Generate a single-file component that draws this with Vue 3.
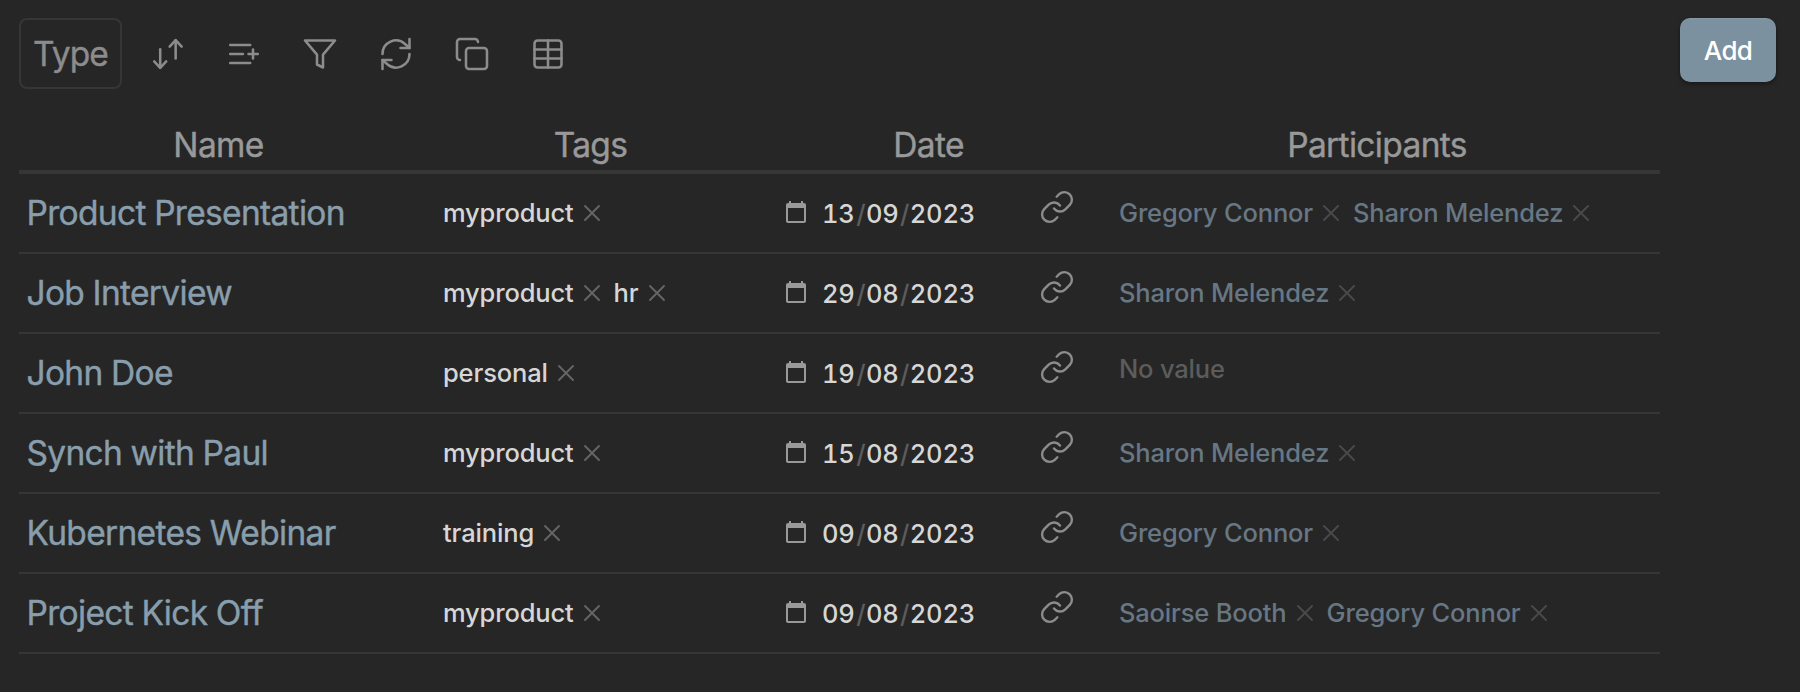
<script setup>
const rows = [
  { name: 'Product Presentation', tags: ['myproduct'], date: ['13', '09', '2023'], people: ['Gregory Connor', 'Sharon Melendez'] },
  { name: 'Job Interview', tags: ['myproduct', 'hr'], date: ['29', '08', '2023'], people: ['Sharon Melendez'] },
  { name: 'John Doe', tags: ['personal'], date: ['19', '08', '2023'], people: [] },
  { name: 'Synch with Paul', tags: ['myproduct'], date: ['15', '08', '2023'], people: ['Sharon Melendez'] },
  { name: 'Kubernetes Webinar', tags: ['training'], date: ['09', '08', '2023'], people: ['Gregory Connor'] },
  { name: 'Project Kick Off', tags: ['myproduct'], date: ['09', '08', '2023'], people: ['Saoirse Booth', 'Gregory Connor'] },
]
const tools = [
  { id: 'sort', paths: ['M6.8 8.8v12.4', 'M2.8 16.9l4 4.3 4-4.3', 'M17.1 15V2.8', 'M13.1 7.1l4-4.3 4 4.3'] },
  { id: 'properties', paths: ['M2.8 6h13.3', 'M2.8 12h8.5', 'M2.8 18h13.3', 'M15 12h6.2', 'M18 9v6'] },
  { id: 'filter', paths: ['M22 3H2l8 9.46V19l4 2v-8.54z'] },
  { id: 'refresh', paths: ['M21 2v6h-6', 'M3 12a9 9 0 0 1 15-6.7L21 8', 'M3 22v-6h6', 'M21 12a9 9 0 0 1-15 6.7L3 16'] },
  { id: 'copy', paths: ['M10 8h10a2 2 0 0 1 2 2v10a2 2 0 0 1-2 2H10a2 2 0 0 1-2-2V10a2 2 0 0 1 2-2z', 'M4 16c-1.1 0-2-.9-2-2V4c0-1.1.9-2 2-2h10c1.1 0 2 .9 2 2'] },
  { id: 'table', paths: ['M5 3h14a2 2 0 0 1 2 2v14a2 2 0 0 1-2 2H5a2 2 0 0 1-2-2V5a2 2 0 0 1 2-2z', 'M3 9h18', 'M3 15h18', 'M12 3v18'] },
]
</script>

<template>
  <main class="view">
    <header class="toolbar">
      <button class="type">Type</button>
      <div class="tools">
        <svg v-for="t in tools" :key="t.id" class="tool" viewBox="0 0 24 24">
          <path v-for="d in t.paths" :key="d" :d="d" />
        </svg>
      </div>
      <button class="add">Add</button>
    </header>

    <section class="table">
      <div class="row head">
        <div>Name</div>
        <div>Tags</div>
        <div>Date</div>
        <div>Participants</div>
      </div>
      <div v-for="r in rows" :key="r.name" class="row body">
        <div class="cell name">{{ r.name }}</div>
        <div class="cell tags">
          <span v-for="t in r.tags" :key="t" class="chip">
            <span class="label">{{ t }}</span>
            <svg class="x" viewBox="0 0 16 16"><path d="M1 1l14 14M15 1L1 15" /></svg>
          </span>
        </div>
        <div class="cell date">
          <svg class="calendar" viewBox="0 0 20 22">
            <path class="solid" d="M3 0h2v2h10V0h2v2h1a2 2 0 0 1 2 2v16a2 2 0 0 1-2 2H2a2 2 0 0 1-2-2V4a2 2 0 0 1 2-2h1zM2 7v13h16V7z" />
          </svg>
          <span class="digits">{{ r.date[0] }}<i>/</i>{{ r.date[1] }}<i>/</i>{{ r.date[2] }}</span>
          <svg class="link" viewBox="0 0 24 24">
            <path d="M10 13a5 5 0 0 0 7.54.54l3-3a5 5 0 0 0-7.07-7.07l-1.72 1.71" />
            <path d="M14 11a5 5 0 0 0-7.54-.54l-3 3a5 5 0 0 0 7.07 7.07l1.71-1.71" />
          </svg>
        </div>
        <div class="cell people">
          <span v-for="p in r.people" :key="p" class="chip">
            <span class="label">{{ p }}</span>
            <svg class="x" viewBox="0 0 16 16"><path d="M1 1l14 14M15 1L1 15" /></svg>
          </span>
          <span v-if="!r.people.length" class="empty">No value</span>
        </div>
      </div>
    </section>
  </main>
</template>

<style>
html, body { margin: 0; background: #262626; }
</style>

<style scoped>
.view {
  box-sizing: border-box;
  height: 692px;
  padding: 18px 24px 0 19px;
  background: #262626;
  font-family: Inter, "Liberation Sans", sans-serif;
  font-weight: 500;
  color: #999;
  overflow: hidden;
}
button { font-family: inherit; font-weight: inherit; padding: 0; }
svg { fill: none; stroke: currentColor; stroke-linecap: round; stroke-linejoin: round; flex: none; display: block; }
.toolbar { display: flex; align-items: flex-start; height: 96px; }
.type {
  box-sizing: border-box;
  width: 103px;
  height: 71px;
  border: 2px solid #363636;
  border-radius: 8px;
  background: none;
  color: #8c8c8c;
  font-size: 33.5px;
  font-weight: 400;
  -webkit-text-stroke: 0.4px currentColor;
  letter-spacing: -0.9px;
  line-height: 67px;
  padding-top: 1px;
}
.tools { display: flex; gap: 40px; margin: 18px 0 0 28px; color: #8c8c8c; }
.tool { width: 36px; height: 36px; stroke-width: 1.7; }
.add {
  width: 96px;
  height: 64px;
  margin-left: auto;
  border: 0;
  border-radius: 10px;
  background: #7b919f;
  color: #fff;
  font-size: 26px;
  letter-spacing: -0.7px;
  line-height: 66px;
  box-shadow: 0 2px 4px rgba(0, 0, 0, 0.4), inset 0 1px 0 rgba(255, 255, 255, 0.08);
}
.table { width: 1641px; }
.row { display: grid; grid-template-columns: 400px 344px 332px 565px; box-sizing: border-box; }
.head {
  height: 60px;
  border-bottom: 4px solid #363636;
  text-align: center;
  font-size: 33.5px;
  font-weight: 400;
  -webkit-text-stroke: 0.4px currentColor;
  letter-spacing: -0.65px;
  line-height: 62px;
}
.head > div { margin-left: -1px; }
.body { height: 80px; border-bottom: 2px solid #363636; }
.cell { display: flex; align-items: center; height: 78px; white-space: nowrap; }
.name {
  padding-left: 7.5px;
  color: #889eac;
  font-size: 33.5px;
  font-weight: 400;
  -webkit-text-stroke: 0.4px currentColor;
  letter-spacing: -0.68px;
  word-spacing: -0.3px;
}
.tags { padding-left: 24px; gap: 14px; color: #d6d6d6; font-size: 25.5px; letter-spacing: -0.15px; }
.people { padding-left: 24px; gap: 14px; color: #677784; font-size: 25.5px; letter-spacing: -0.17px; }
.label { margin-top: -2px; }
.chip { display: flex; align-items: center; gap: 10px; }
.x { width: 16px; height: 16px; stroke-width: 1.8; color: #666; }
.people .x { color: #4a4a4a; }
.date { padding-left: 23px; }
.calendar { width: 20px; height: 22px; color: #999; margin-top: -2px; }
.calendar .solid { fill: currentColor; stroke: none; fill-rule: evenodd; }
.digits { width: 200px; margin-left: 16px; color: #d6d6d6; font-size: 25.5px; font-variant-numeric: tabular-nums; letter-spacing: -0.2px; }
.digits i { font-style: normal; color: #5c5c5c; margin: 0 0.5px 0 1.5px; }
.link { width: 36px; height: 36px; margin: -12px 0 0 17px; stroke-width: 1.6; color: #8c8c8c; }
.empty { color: #5c5c5c; margin-top: -10px; }
</style>
